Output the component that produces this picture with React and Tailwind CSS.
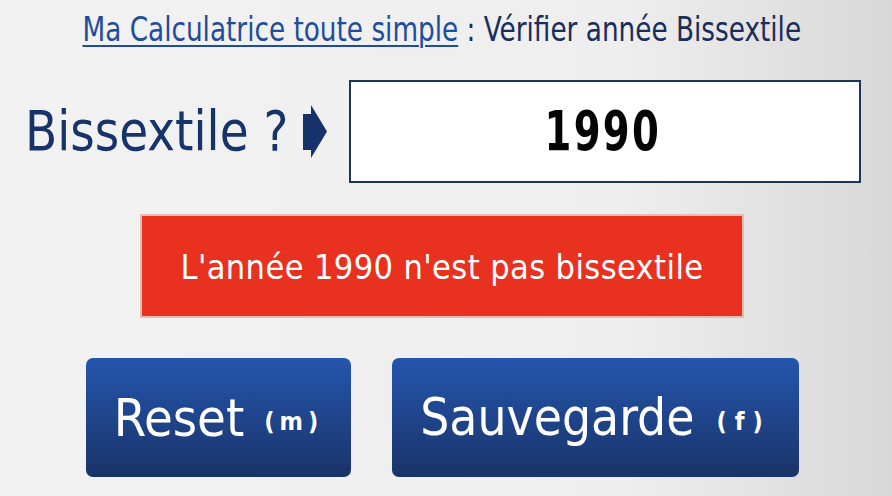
import React from "react";

const F = { fontFamily: '"DejaVu Sans Condensed","Liberation Sans Narrow","Roboto",sans-serif' };

function Arrow() {
  return (
    <svg width="26" height="57" viewBox="0 0 26 57" className="shrink-0 block">
      <polygon points="1,11 9,11 9,2 25,28.5 9,55 9,47 1,47" fill="#15336a" />
    </svg>
  );
}

export default function App() {
  return (
    <div
      className="w-[892px] h-[496px] overflow-hidden flex flex-col bg-[linear-gradient(to_right,#f2f2f2_0%,#eeeeee_70%,#d8d8d8_100%)]"
      style={F}
    >
      <div className="h-[56px] pt-[9px] pr-[9px] flex justify-center">
        <div className="text-[34px] leading-[40px] text-[#1a2d5a] whitespace-nowrap scale-x-[0.86] origin-center">
          <span className="text-[#1f4c9b] underline decoration-[2px] underline-offset-[4px]">Ma Calculatrice toute simple</span>
          <span> : Vérifier année Bissextile</span>
        </div>
      </div>
      <div className="flex items-center pl-[25px] mt-[24px] h-[103px]">
        <div className="w-[262px] whitespace-nowrap">
          <div className="inline-block text-[55px] leading-none text-[#17346a] scale-x-[0.95] origin-left">Bissextile ?</div>
        </div>
        <div className="ml-[15px]"><Arrow /></div>
        <div className="ml-[21px] w-[512px] h-[103px] bg-white border-2 border-[#1c3654] flex items-center justify-center">
          <span className="inline-block text-[55px] font-bold text-[#050505] leading-none scale-x-[0.78] tracking-[3px] ml-[-4px]">1990</span>
        </div>
      </div>
      <div className="ml-[140px] mt-[31px] w-[604px] h-[104px] bg-[#e8321f] border-2 border-[#e7bcb2] flex items-center justify-center">
        <span className="text-[34px] text-white whitespace-nowrap tracking-[0.4px] pt-[2px]">L'année 1990 n'est pas bissextile</span>
      </div>
      <div className="flex ml-[86px] mt-[40px] gap-[41px]">
        <div className="w-[265px] h-[119px] rounded-[7px] bg-[linear-gradient(to_bottom,#2456ad,#1a3368)] flex items-center justify-center gap-[20px] text-white">
          <span className="text-[52px] leading-none">Reset</span>
          <span className="text-[25px] font-bold tracking-[5px] leading-none pt-[8px]">(m)</span>
        </div>
        <div className="w-[407px] h-[119px] rounded-[7px] bg-[linear-gradient(to_bottom,#2456ad,#1a3368)] flex items-center justify-center gap-[22px] text-white">
          <span className="text-[51px] leading-none">Sauvegarde</span>
          <span className="text-[25px] font-bold tracking-[8px] leading-none pt-[8px]">(f)</span>
        </div>
      </div>
    </div>
  );
}
